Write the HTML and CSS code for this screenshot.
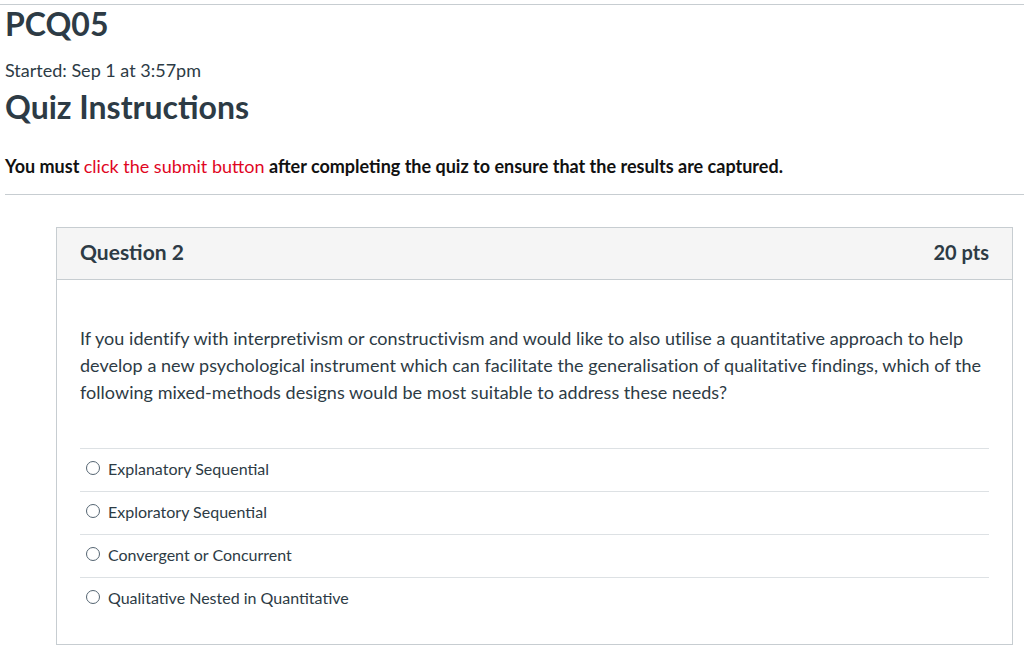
FILE: index.html
```html
<!DOCTYPE html>
<html lang="en">
<head>
  <meta charset="UTF-8">
  <title>PCQ05 – Quiz</title>
  <link rel="stylesheet" href="styles.css">
</head>
<body>

<div class="page">
  <header class="quiz-header">
    <h1>PCQ05</h1>
    <p class="started">Started: Sep 1 at 3:57pm</p>
    <h2>Quiz Instructions</h2>
    <p class="instructions">You must <span class="warn">click the submit button</span> after completing the quiz to ensure that the results are captured.</p>
  </header>

  <!-- QUESTION -->
  <div class="question">
    <div class="question-head">
      <span class="q-title">Question 2</span>
      <span class="q-points">20 pts</span>
    </div>
    <div class="question-body">
      <p class="q-text">If you identify with interpretivism or constructivism and would like to also utilise a quantitative approach to help develop a new psychological instrument which can facilitate the generalisation of qualitative findings, which of the following mixed-methods designs would be most suitable to address these needs?</p>
      <div class="answers">
        <label class="answer"><span class="radio"></span>Explanatory Sequential</label>
        <label class="answer"><span class="radio"></span>Exploratory Sequential</label>
        <label class="answer"><span class="radio"></span>Convergent or Concurrent</label>
        <label class="answer"><span class="radio"></span>Qualitative Nested in Quantitative</label>
      </div>
    </div>
  </div>
</div>

</body>
</html>
```

FILE: styles.css
```css
body {
  font-family: Lato, "Open Sans", sans-serif;
  background: #fff;
  color: #2d3b45;
  margin: 0;
}
.page {
  border-top: 1px solid #c7cdd1;
  margin-top: 4px;
  padding-left: 5px;
}
.quiz-header {
  border-bottom: 1px solid #c7cdd1;
  padding-bottom: 17px;
}
h1 {
  font-size: 32px;
  font-weight: 700;
  margin: 0;
  line-height: 38px;
}
.started {
  font-size: 18px;
  margin: 16px 0 0;
  line-height: 22px;
}
h2 {
  font-size: 32px;
  font-weight: 700;
  margin: 7px 0 0;
  line-height: 38px;
}
.instructions {
  font-size: 18px;
  font-weight: 700;
  color: #111;
  margin: 29px 0 0;
  line-height: 22px;
}
.warn {
  color: #e0061f;
  font-weight: 400;
}
.question {
  margin: 32px 11px 0 51px;
  border: 1px solid #c7cdd1;
  height: 416px;
}
.question-head {
  display: flex;
  justify-content: space-between;
  align-items: center;
  background: #f5f5f5;
  border-bottom: 1px solid #c7cdd1;
  height: 52px;
  box-sizing: border-box;
  padding: 0 23px 4px;
  font-size: 21px;
  font-weight: 700;
}
.q-points {
  font-size: 20px;
}
.question-body {
  padding: 45px 23px 0;
}
.q-text {
  font-size: 18px;
  line-height: 27px;
  margin: 0 0 42px;
  letter-spacing: 0.04px;
}
.answer {
  display: flex;
  align-items: center;
  height: 43px;
  box-sizing: border-box;
  border-top: 1px solid #dde1e4;
  font-size: 16px;
  padding: 0 0 4px 6px;
}
.radio {
  width: 12px;
  height: 12px;
  border: 1px solid #556572;
  border-radius: 50%;
  margin-right: 8px;
}
```
